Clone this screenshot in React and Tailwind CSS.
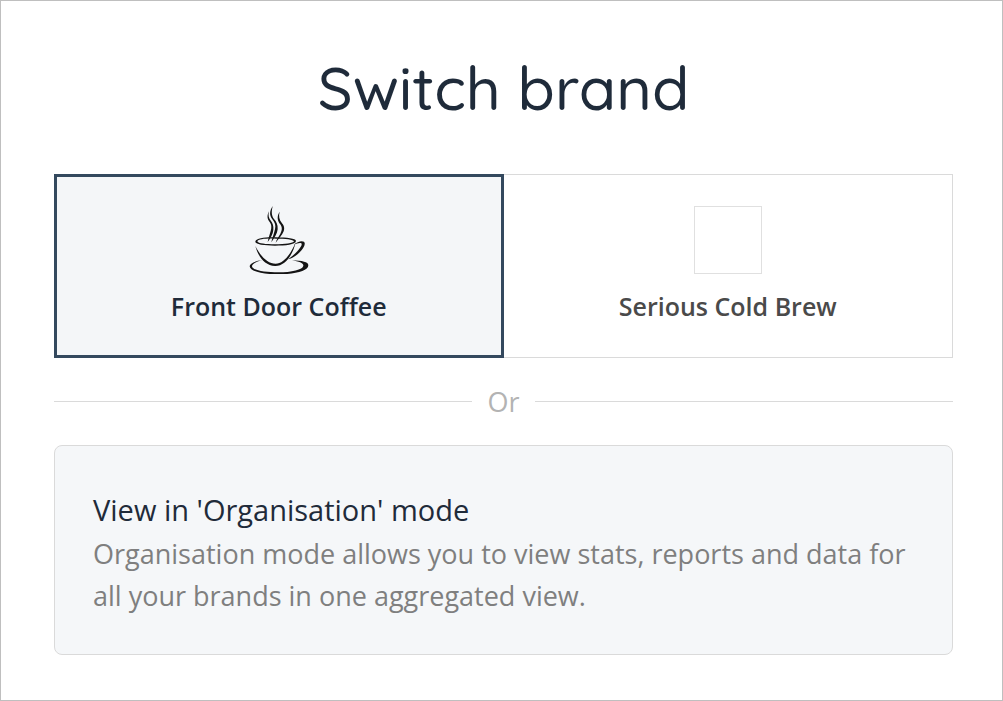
import clsx from "clsx";

function CoffeeLogo() {
  return (
    <svg viewBox="15 30 204 204" className="size-[68px]" fill="#141414" aria-hidden="true">
      {/* steam */}
      <path d="M98 30C88 46 88 58 97 70C105 80 108 88 105 100C102 114 97 124 94 139C103 126 112 113 113 100C114 86 109 77 102 69C94 58 94 48 98 30Z" />
      <path d="M87 46C80 60 82 69 89 78C95 86 95 94 92 105C89 117 85 126 83 138C92 125 99 114 100 101C101 90 98 82 93 75C86 66 84 59 87 46Z" />
      <path d="M119 47C110 60 112 74 120 84C127 93 127 101 121 113C115 124 110 129 107 140C116 129 126 118 131 106C135 95 131 87 125 80C118 71 115 60 119 47Z" />
      {/* rim */}
      <path
        fillRule="evenodd"
        d="M46 136C50 126 76 123 108 124C140 125 168 127 168 135C167 146 136 149 105 149C74 149 44 146 46 136ZM52 136C54 143 78 145 105 145C135 145 160 142 162 136C160 130 136 128 108 128C78 127 55 129 52 136Z"
      />
      {/* bowl */}
      <path d="M46 150C54 180 74 209 105 210C134 211 159 178 167 138C153 174 131 203 107 203C82 203 61 180 46 150Z" />
      {/* handle */}
      <path d="M162 146C171 137 185 133 192 137C199 144 189 159 179 169C169 179 157 187 145 190C156 180 164 175 172 166C181 156 188 146 184 142C180 139 171 142 162 146Z" />
      {/* saucer */}
      <path d="M68 192C45 195 29 202 29 211C30 227 70 235 115 235C165 235 205 225 205 208C205 198 187 194 156 193C177 197 191 201 190 209C189 221 154 229 115 229C76 229 36 223 36 211C36 203 49 197 68 192Z" />
    </svg>
  );
}

const brands = [
  { name: "Front Door Coffee", logo: <CoffeeLogo /> },
  { name: "Serious Cold Brew", logo: <span className="block size-[68px] border border-[#e0e0e0] bg-white" /> },
];

function BrandCard({ name, logo, active }) {
  return (
    <button
      type="button"
      aria-pressed={active}
      className={clsx(
        "flex h-[184px] flex-col items-center justify-center gap-[13px] pb-0.5 text-[25px] leading-[38px] font-semibold",
        active
          ? "border-3 border-[#34495e] bg-[#f4f6f8] text-[#1f2b3a]"
          : "border border-l-0 border-[#dadada] bg-white text-[#4a4a4a]"
      )}
    >
      {logo}
      <span>{name}</span>
    </button>
  );
}

export default function App() {
  return (
    <main className="min-h-screen border border-[#bfbfbf] bg-white pt-12 pr-[49px] pb-11 pl-[53px] font-['Segoe_UI','Open_Sans',sans-serif]">
      <h1 className="mb-[49px] text-center font-['Quicksand','Lato',sans-serif] text-[61px] leading-[76px] font-medium text-[#1f2b3a]">
        Switch brand
      </h1>

      <div className="grid grid-cols-2">
        {brands.map((brand, i) => (
          <BrandCard key={brand.name} {...brand} active={i === 0} />
        ))}
      </div>

      <div className="my-[22px] flex h-[43px] items-center gap-[15px]">
        <span className="h-px flex-1 bg-[#dadada]" />
        <span className="text-[27px] leading-[42px] text-[#b3b3b3]">Or</span>
        <span className="h-px flex-1 bg-[#dadada]" />
      </div>

      <button
        type="button"
        className="block w-full rounded-lg border border-[#dadada] bg-[#f5f7f9] px-[38px] pt-[41px] pb-[37px] text-left"
      >
        <span className="block text-[29px] leading-[46px] text-[#1f2b3a]">View in 'Organisation' mode</span>
        <span className="block text-[27px] leading-[42px] text-[#7f7f7f]">
          Organisation mode allows you to view stats, reports and data for all your brands in one aggregated view.
        </span>
      </button>
    </main>
  );
}
